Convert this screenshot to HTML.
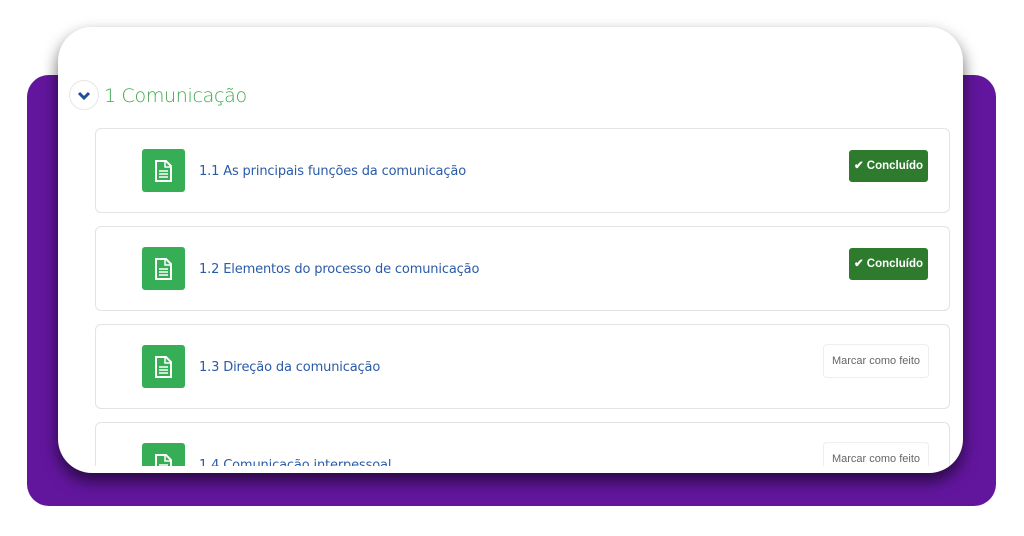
<!DOCTYPE html>
<html><head><meta charset="utf-8"><style>
body{margin:0;width:1024px;height:536px;background:#fff;position:relative;overflow:hidden;font-family:"Liberation Sans",sans-serif}
.purple{position:absolute;left:27px;top:75px;width:969px;height:431px;background:#62169e;border-radius:22px}
.card{position:absolute;left:58px;top:27px;width:905px;height:446px;background:#fff;border-radius:34px;box-shadow:0 8px 16px rgba(0,0,0,.6);overflow:hidden}
.inner{position:absolute;left:0;top:0;width:905px;height:439px;overflow:hidden}
.toggle{position:absolute;left:11px;top:53px;width:30px;height:30px;border:1px solid #e6e6e6;border-radius:50%;box-sizing:border-box}
.title{position:absolute;left:46px;top:58px;font-size:19px;color:#3ea64a;font-family:"DejaVu Sans",sans-serif;font-weight:300;letter-spacing:-.3px}
.item{position:absolute;left:37px;width:855px;height:85px;border:1px solid #e3e3e3;border-radius:6px;box-sizing:border-box;background:#fff}
.ic{position:absolute;left:46px;top:20px;width:43px;height:43px;background:#35ae55;border-radius:3px}
.ic svg{position:absolute;left:12px;top:11px}
.lbl{position:absolute;left:103px;top:35px;font-size:13px;color:#2a5ba8;font-family:"DejaVu Sans",sans-serif;letter-spacing:-.15px}
.done{position:absolute;left:753px;top:21px;width:79px;height:32px;background:#2f7b2e;border-radius:3px;color:#fff;font-size:11.5px;font-weight:bold;line-height:32px;text-align:center}
.mark{position:absolute;left:727px;top:19px;width:106px;height:34px;border:1px solid #eee;border-radius:4px;box-sizing:border-box;color:#666;font-size:11px;line-height:32px;text-align:center}
</style></head><body>
<div class="purple"></div>
<div class="card"><div class="inner">
<div class="toggle"><svg width="30" height="30" style="position:absolute;left:-1px;top:-1px"><path d="M10 13 L15 18 L20 13" stroke="#1f4f9e" stroke-width="3" fill="none"/></svg></div>
<div class="title">1 Comunicação</div>
<div class="item" style="top:101px"><div class="ic"><svg width="19" height="22" viewBox="0 0 19 22"><path d="M2 1H12L17 6V21H2Z" fill="none" stroke="#fff" stroke-width="2"/><path d="M11 1V7H17" fill="none" stroke="#fff" stroke-width="1.5"/><path d="M5 11H14M5 14H14M5 17H14" stroke="#fff" stroke-width="1.6"/></svg></div><div class="lbl">1.1 As principais funções da comunicação</div><div class="done">✔ Concluído</div></div>
<div class="item" style="top:199px"><div class="ic"><svg width="19" height="22" viewBox="0 0 19 22"><path d="M2 1H12L17 6V21H2Z" fill="none" stroke="#fff" stroke-width="2"/><path d="M11 1V7H17" fill="none" stroke="#fff" stroke-width="1.5"/><path d="M5 11H14M5 14H14M5 17H14" stroke="#fff" stroke-width="1.6"/></svg></div><div class="lbl">1.2 Elementos do processo de comunicação</div><div class="done">✔ Concluído</div></div>
<div class="item" style="top:297px"><div class="ic"><svg width="19" height="22" viewBox="0 0 19 22"><path d="M2 1H12L17 6V21H2Z" fill="none" stroke="#fff" stroke-width="2"/><path d="M11 1V7H17" fill="none" stroke="#fff" stroke-width="1.5"/><path d="M5 11H14M5 14H14M5 17H14" stroke="#fff" stroke-width="1.6"/></svg></div><div class="lbl">1.3 Direção da comunicação</div><div class="mark">Marcar como feito</div></div>
<div class="item" style="top:395px"><div class="ic"><svg width="19" height="22" viewBox="0 0 19 22"><path d="M2 1H12L17 6V21H2Z" fill="none" stroke="#fff" stroke-width="2"/><path d="M11 1V7H17" fill="none" stroke="#fff" stroke-width="1.5"/><path d="M5 11H14M5 14H14M5 17H14" stroke="#fff" stroke-width="1.6"/></svg></div><div class="lbl">1.4 Comunicação interpessoal</div><div class="mark">Marcar como feito</div></div>
</div></div>
</body></html>
